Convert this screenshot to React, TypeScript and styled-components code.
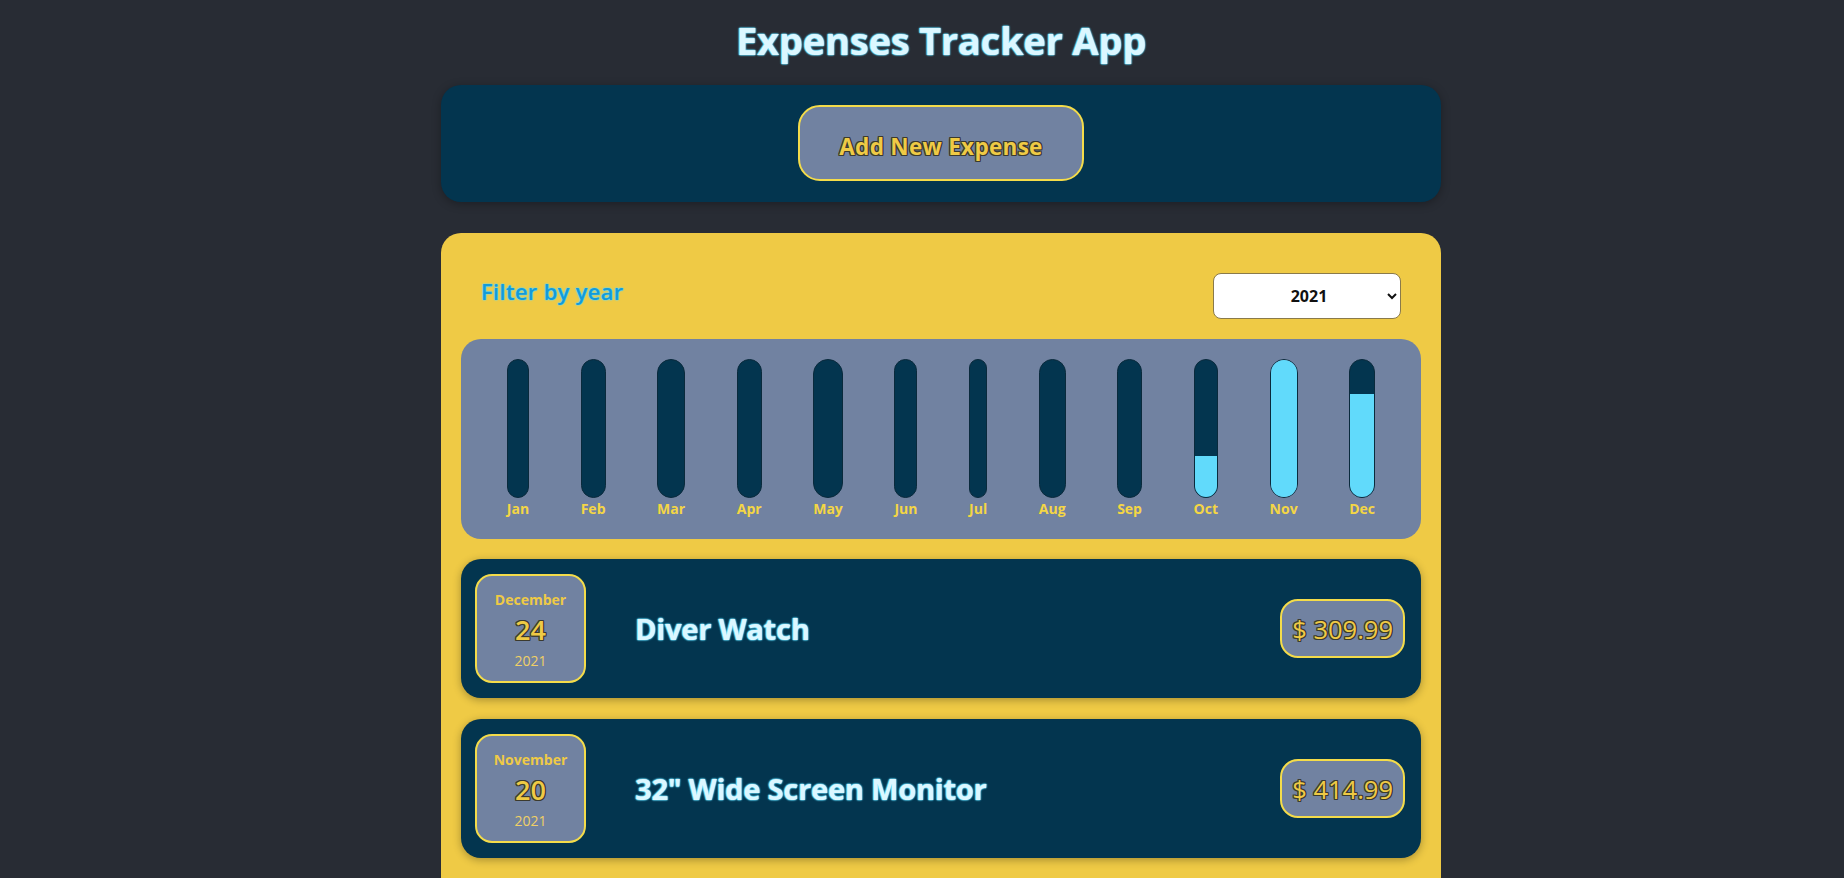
import React, { useState } from "react";
import styled, { createGlobalStyle } from "styled-components";

const GlobalStyle = createGlobalStyle`
  * { box-sizing: border-box; }
  html, body { margin: 0; padding: 0; }
  body {
    background: #282c34;
    font-family: "Open Sans", "Noto Sans", sans-serif;
    overflow: hidden;
  }
`;

const NAVY = "#03354f";
const SLATE = "#7182a1";
const YELLOW = "#efca45";
const BORDER_YELLOW = "#f4dc4a";
const CYAN = "#61dafb";

const Page = styled.div`
  width: 1000px;
  margin-left: calc(50% - 481px);
`;

const glowText = `
  color: #dcf7ff;
  text-shadow: 0 0 2px ${CYAN}, 0 0 2px ${CYAN}, 0 0 1px ${CYAN}, 0 0 1px ${CYAN};
`;

const Title = styled.h1`
  margin: 0;
  height: 85px;
  display: flex;
  align-items: center;
  justify-content: center;
  font-size: 38px;
  font-weight: 700;
  letter-spacing: -0.2px;
  padding-bottom: 6px;
  ${glowText}
`;

const NewExpensePanel = styled.div`
  background: ${NAVY};
  border-radius: 20px;
  padding: 20px 0 21px;
  display: flex;
  justify-content: center;
  box-shadow: 0 2px 10px rgba(0, 0, 0, 0.3);
`;

const outlineText = `
  text-shadow: -1px -1px 0 #3b3a2e, 1px -1px 0 #3b3a2e, -1px 1px 0 #3b3a2e, 1px 1px 0 #3b3a2e,
    0 -1px 0 #3b3a2e, 0 1px 0 #3b3a2e, -1px 0 0 #3b3a2e, 1px 0 0 #3b3a2e;
`;

const AddButton = styled.button`
  width: 286px;
  height: 76px;
  background: ${SLATE};
  border: 2px solid ${BORDER_YELLOW};
  border-radius: 22px;
  font-family: "Open Sans", "Noto Sans", sans-serif;
  font-size: 22.5px;
  font-weight: 700;
  color: ${YELLOW};
  letter-spacing: 0.3px;
  cursor: pointer;
  padding: 6px 0 0;
  ${outlineText}
`;

const ExpensesCard = styled.div`
  margin-top: 31px;
  background: ${YELLOW};
  border-radius: 20px 20px 0 0;
  padding: 20px;
  min-height: 700px;
`;

const FilterRow = styled.div`
  display: flex;
  align-items: center;
  justify-content: space-between;
  padding: 20px 20px;
`;

const FilterLabel = styled.label`
  font-size: 22px;
  font-weight: 600;
  color: #139bd8;
  letter-spacing: 0.3px;
  text-shadow: 0 0 2px ${CYAN}, 0 0 1px ${CYAN}, 0 0 1px ${CYAN};
  margin-top: -10px;
`;

const YearSelect = styled.select`
  width: 188px;
  height: 46px;
  border-radius: 8px;
  border: 1px solid #8a7a4a;
  background: #ffffff;
  font-family: "Open Sans", "Noto Sans", sans-serif;
  font-size: 16px;
  font-weight: 700;
  color: #111;
  text-align: center;
  padding: 0 10px 0 26px;
`;

const Chart = styled.div`
  background: ${SLATE};
  border-radius: 20px;
  padding: 20px;
  height: 200px;
  display: flex;
  justify-content: space-around;
`;

const BarColumn = styled.div`
  height: 100%;
  display: flex;
  flex-direction: column;
  align-items: stretch;
`;

const BarTrack = styled.div`
  flex: 1;
  border: 1px solid #0a2a3c;
  border-radius: 999px;
  background: ${NAVY};
  overflow: hidden;
  display: flex;
  flex-direction: column;
  justify-content: flex-end;
`;

const BarFill = styled.div`
  width: 100%;
  background: ${CYAN};
`;

const BarLabel = styled.div`
  height: 21px;
  line-height: 22px;
  font-size: 14px;
  font-weight: 700;
  color: #f4d645;
  text-align: center;
  white-space: nowrap;
`;

const ExpenseList = styled.ul`
  list-style: none;
  margin: 20px 0 0;
  padding: 0;
  display: flex;
  flex-direction: column;
  gap: 21px;
`;

const ExpenseRow = styled.li`
  background: ${NAVY};
  border-radius: 20px;
  padding: 15px 16px 15px 14px;
  display: flex;
  align-items: center;
  box-shadow: 0 2px 8px rgba(0, 0, 0, 0.3);
`;

const DateBox = styled.div`
  width: 111px;
  height: 109px;
  flex-shrink: 0;
  background: ${SLATE};
  border: 2px solid ${BORDER_YELLOW};
  border-radius: 17px;
  display: flex;
  flex-direction: column;
  align-items: center;
  justify-content: center;
  color: ${YELLOW};
  padding-top: 4px;
`;

const DateMonth = styled.div`
  font-size: 14px;
  font-weight: 700;
  line-height: 20px;
`;

const DateDay = styled.div`
  font-size: 27px;
  font-weight: 600;
  line-height: 36px;
  margin-top: 2px;
  ${outlineText}
`;

const DateYear = styled.div`
  font-size: 14px;
  font-weight: 400;
  line-height: 22px;
  margin-top: 2px;
  color: #f0d066;
`;

const ExpenseTitle = styled.h2`
  flex: 1;
  margin: 0 0 0 49px;
  font-size: 29px;
  font-weight: 700;
  letter-spacing: -0.2px;
  ${glowText}
`;

const PriceTag = styled.div`
  height: 59px;
  padding: 0 10px;
  display: flex;
  align-items: center;
  background: ${SLATE};
  border: 2px solid ${BORDER_YELLOW};
  border-radius: 18px;
  font-size: 25.5px;
  font-weight: 500;
  color: ${YELLOW};
  ${outlineText}
`;

type Expense = { id: string; title: string; amount: number; date: Date };

const expenses: Expense[] = [
  { id: "e1", title: "Diver Watch", amount: 309.99, date: new Date(2021, 11, 24) },
  { id: "e2", title: '32" Wide Screen Monitor', amount: 414.99, date: new Date(2021, 10, 20) },
  { id: "e3", title: "Headphones", amount: 124.5, date: new Date(2021, 9, 12) },
];

const MONTHS = ["Jan", "Feb", "Mar", "Apr", "May", "Jun", "Jul", "Aug", "Sep", "Oct", "Nov", "Dec"];

function ExpenseItem({ expense }: { expense: Expense }) {
  const month = expense.date.toLocaleString("en-US", { month: "long" });
  const day = expense.date.getDate();
  const year = expense.date.getFullYear();
  return (
    <ExpenseRow>
      <DateBox>
        <DateMonth>{month}</DateMonth>
        <DateDay>{day}</DateDay>
        <DateYear>{year}</DateYear>
      </DateBox>
      <ExpenseTitle>{expense.title}</ExpenseTitle>
      <PriceTag>$ {expense.amount}</PriceTag>
    </ExpenseRow>
  );
}

export default function App() {
  const [year, setYear] = useState("2021");
  const filtered = expenses.filter((e) => String(e.date.getFullYear()) === year);
  const values = MONTHS.map((_, i) =>
    filtered.filter((e) => e.date.getMonth() === i).reduce((s, e) => s + e.amount, 0)
  );
  const max = Math.max(...values, 1);
  const shown = filtered.filter((e) => e.id !== "e3");

  return (
    <>
      <GlobalStyle />
      <Page>
        <Title>Expenses Tracker App</Title>
        <NewExpensePanel>
          <AddButton type="button">Add New Expense</AddButton>
        </NewExpensePanel>
        <ExpensesCard>
          <FilterRow>
            <FilterLabel>Filter by year</FilterLabel>
            <YearSelect value={year} onChange={(e) => setYear(e.target.value)}>
              <option value="2022">2022</option>
              <option value="2021">2021</option>
              <option value="2020">2020</option>
              <option value="2019">2019</option>
            </YearSelect>
          </FilterRow>
          <Chart>
            {MONTHS.map((m, i) => (
              <BarColumn key={m}>
                <BarTrack>
                  <BarFill style={{ height: `${Math.round((values[i] / max) * 100)}%` }} />
                </BarTrack>
                <BarLabel>{m}</BarLabel>
              </BarColumn>
            ))}
          </Chart>
          <ExpenseList>
            {shown.map((e) => (
              <ExpenseItem key={e.id} expense={e} />
            ))}
          </ExpenseList>
        </ExpensesCard>
      </Page>
    </>
  );
}
